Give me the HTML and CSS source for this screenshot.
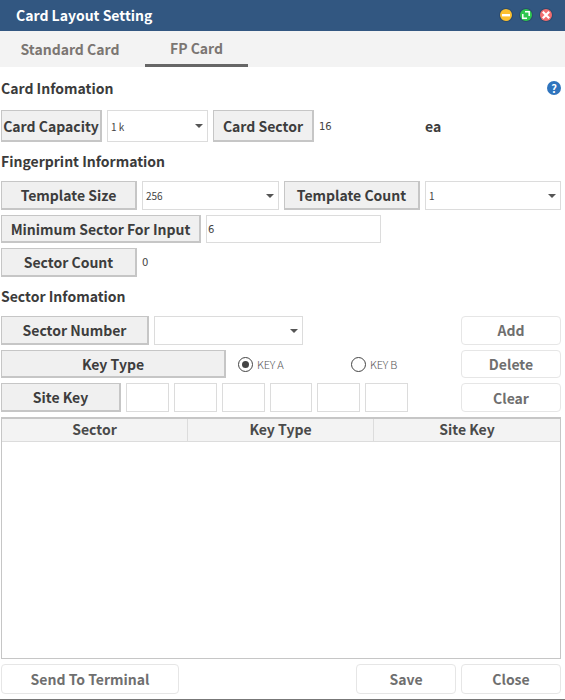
FILE: index.html
```html
<!DOCTYPE html>
<html lang="en">
<head>
  <meta charset="UTF-8" />
  <title>Card Layout Setting</title>
  <link rel="stylesheet" href="styles.css">
</head>
<body>
  <div class="window">
    <div class="titlebar">
      <span class="title">Card Layout Setting</span>
      <div class="win-btns">
        <span class="win-btn yellow">
          <svg width="12" height="12" viewBox="0 0 12 12"><rect x="2" y="5" width="8" height="2.4" fill="#fff"/></svg>
        </span>
        <span class="win-btn green">
          <svg width="12" height="12" viewBox="0 0 12 12"><path d="M5 2.8h4.2V7M7 9.2H2.8V5" fill="none" stroke="#fff" stroke-width="1.5"/></svg>
        </span>
        <span class="win-btn red">
          <svg width="12" height="12" viewBox="0 0 12 12"><path d="M2.8 2.8l6.4 6.4M9.2 2.8l-6.4 6.4" stroke="#fff" stroke-width="2.2"/></svg>
        </span>
      </div>
    </div>

    <div class="tabs">
      <div class="tab">Standard Card</div>
      <div class="tab active">FP Card</div>
    </div>

    <div class="content">
      <div class="heading-row">
        <h2>Card Infomation</h2>
        <span class="help">?</span>
      </div>
      <div class="row row-tall">
        <div class="label w-101">Card Capacity</div>
        <div class="select w-101"><span>1 k</span><i class="caret"></i></div>
        <div class="label w-101">Card Sector</div>
        <span class="value w-sector">16</span>
        <span class="unit">ea</span>
      </div>

      <h2 class="heading">Fingerprint Information</h2>
      <div class="row">
        <div class="label w-136">Template Size</div>
        <div class="select w-137"><span>256</span><i class="caret"></i></div>
        <div class="label w-136">Template Count</div>
        <div class="select w-136"><span>1</span><i class="caret"></i></div>
      </div>
      <div class="row row-short">
        <div class="label w-200">Minimum Sector For Input</div>
        <input class="field w-175" type="text" value="6" />
      </div>
      <div class="row row-last">
        <div class="label w-136">Sector Count</div>
        <span class="value">0</span>
      </div>

      <h2 class="heading">Sector Infomation</h2>
      <div class="split">
        <div class="split-left">
          <div class="row">
            <div class="label w-148">Sector Number</div>
            <div class="select w-149"><i class="caret"></i></div>
          </div>
          <div class="row row-short">
            <div class="label w-225">Key Type</div>
            <div class="radios">
              <label class="radio"><i class="dot on"></i>KEY A</label>
              <label class="radio"><i class="dot"></i>KEY B</label>
            </div>
          </div>
          <div class="row">
            <div class="label w-120">Site Key</div>
            <input class="field key" type="text" />
            <input class="field key" type="text" />
            <input class="field key" type="text" />
            <input class="field key" type="text" />
            <input class="field key" type="text" />
            <input class="field key" type="text" />
          </div>
        </div>
        <div class="split-right">
          <button class="btn tall">Add</button>
          <button class="btn short">Delete</button>
          <button class="btn tall">Clear</button>
        </div>
      </div>

      <div class="grid">
        <div class="grid-head">
          <div>Sector</div>
          <div>Key Type</div>
          <div>Site Key</div>
        </div>
      </div>

      <div class="footer">
        <button class="btn w-178">Send To Terminal</button>
        <div class="footer-right">
          <button class="btn w-100">Save</button>
          <button class="btn w-100">Close</button>
        </div>
      </div>
    </div>
  </div>
</body>
</html>
```

FILE: styles.css
```css
* {
  font-family: "Noto Sans CJK KR", "Noto Sans", sans-serif;
  box-sizing: border-box;
}

body {
  margin: 0;
  background: #fff;
}

.window {
  width: 565px;
  height: 700px;
  display: flex;
  flex-direction: column;
  border-bottom: 1px solid #777;
}

.titlebar {
  height: 31px;
  flex: none;
  background: #325781;
  display: flex;
  align-items: center;
  justify-content: space-between;
  padding: 0 13px 2px 16px;
}

.title {
  color: #fff;
  font-size: 14px;
  font-weight: 700;
}

.win-btns {
  display: flex;
  gap: 8px;
}

.win-btn {
  width: 12px;
  height: 12px;
  border-radius: 50%;
  display: block;
  box-shadow: 0 0 0 1px rgba(0, 0, 0, 0.15);
}

.win-btn svg {
  display: block;
}

.yellow { background: #fcc02e; }
.green { background: #2fc84f; }
.red { background: #f26d6f; }

.tabs {
  height: 36px;
  flex: none;
  background: #f3f3f3;
  display: flex;
}

.tab {
  width: 103px;
  text-align: center;
  font-size: 14px;
  font-weight: 700;
  color: #7b7672;
  line-height: 36px;
}

.tab:first-child {
  width: 140px;
  margin-right: 5px;
}

.tab.active {
  line-height: 34px;
  border-bottom: 3px solid #666;
}

.content {
  flex: 1;
  padding: 0 4px 4px 1px;
  display: flex;
  flex-direction: column;
}

h2 {
  margin: 0;
  font-size: 14px;
  font-weight: 700;
  color: #3b3b3b;
  line-height: 20px;
}

.heading-row {
  display: flex;
  justify-content: space-between;
  align-items: center;
  height: 43px;
  padding-bottom: 2px;
}

.help {
  width: 14px;
  height: 14px;
  border-radius: 50%;
  background: #2f74bd;
  color: #fff;
  font-size: 11px;
  font-weight: 700;
  line-height: 14px;
  text-align: center;
}

.heading {
  height: 39px;
  padding-top: 9px;
}

.row {
  display: flex;
  align-items: center;
  gap: 5px;
  height: 29px;
  margin-bottom: 5px;
}

.row-tall { height: 32px; margin-bottom: 0; }
.row-short { height: 28px; }
.row-last { margin-bottom: 0; }

.label {
  height: 100%;
  flex: none;
  background: #f0f0f0;
  border: 1px solid #c6c6c6;
  border-width: 1px 2px 2px 1px;
  font-size: 14px;
  font-weight: 700;
  color: #3d3d3d;
  display: flex;
  align-items: center;
  justify-content: center;
  white-space: nowrap;
}

.select {
  height: 100%;
  flex: none;
  border: 1px solid #dcdcdc;
  display: flex;
  align-items: center;
  justify-content: space-between;
  padding: 0 4px 0 3px;
  font-family: "DejaVu Sans", sans-serif;
  font-size: 10px;
  color: #444;
}

.caret {
  margin-left: auto;
  width: 0;
  height: 0;
  border: 4px solid transparent;
  border-top: 4px solid #555;
  border-bottom: 0;
}

.field {
  height: 100%;
  flex: none;
  border: 1px solid #dcdcdc;
  padding: 0 1px;
  margin: 0;
  font-family: "DejaVu Sans", sans-serif;
  font-size: 10px;
  color: #444;
  outline: none;
  background: #fff;
}

.key {
  width: 43px;
}

.key:nth-of-type(4) {
  width: 42px;
}

.value {
  font-family: "DejaVu Sans", sans-serif;
  font-size: 10px;
  color: #444;
}

.unit {
  font-size: 14px;
  font-weight: 700;
  color: #3d3d3d;
}

.w-sector { width: 101px; }
.w-100 { width: 100px; }
.w-101 { width: 101px; }
.w-120 { width: 120px; }
.w-136 { width: 136px; }
.w-137 { width: 137px; }
.w-148 { width: 148px; }
.w-149 { width: 149px; }
.w-175 { width: 175px; }
.w-178 { width: 178px; }
.w-200 { width: 200px; }
.w-225 { width: 225px; }

.split {
  display: flex;
  justify-content: space-between;
}

.split-right {
  width: 100px;
  flex: none;
  display: flex;
  flex-direction: column;
}

.radios {
  display: flex;
  padding-left: 7px;
}

.radio {
  width: 113px;
  display: flex;
  align-items: center;
  gap: 4px;
  font-size: 11px;
  font-weight: 300;
  color: #555;
  letter-spacing: -0.2px;
}

.radio:last-child {
  width: 50px;
}

.dot {
  width: 15px;
  height: 15px;
  border: 1px solid #444;
  border-radius: 50%;
  display: flex;
  align-items: center;
  justify-content: center;
}

.dot.on::after {
  content: "";
  width: 7px;
  height: 7px;
  border-radius: 50%;
  background: #444;
}

.btn {
  background: #fff;
  border: 1px solid #e6e6e6;
  border-radius: 4px;
  padding: 0;
  font-size: 14px;
  font-weight: 700;
  color: #6f6f6f;
}

.tall { height: 29px; margin-bottom: 5px; }
.short { height: 28px; margin-bottom: 5px; }

.split-right .btn:first-child {
  padding-bottom: 2px;
}

.grid {
  height: 242px;
  flex: none;
  border: 1px solid #c6c6c6;
  border-top-width: 2px;
}

.grid-head {
  height: 23px;
  display: grid;
  grid-template-columns: 185px 186px 1fr;
  background: #f3f3f3;
  border-bottom: 1px solid #dcdcdc;
}

.grid-head div {
  border-left: 1px solid #dcdcdc;
  text-align: center;
  font-size: 14px;
  font-weight: 700;
  color: #4a4a4a;
  line-height: 20px;
}

.grid-head div:first-child {
  border-left: 0;
}

.footer {
  display: flex;
  justify-content: space-between;
  margin-top: 5px;
  height: 30px;
}

.footer-right {
  display: flex;
  gap: 5px;
}
```
